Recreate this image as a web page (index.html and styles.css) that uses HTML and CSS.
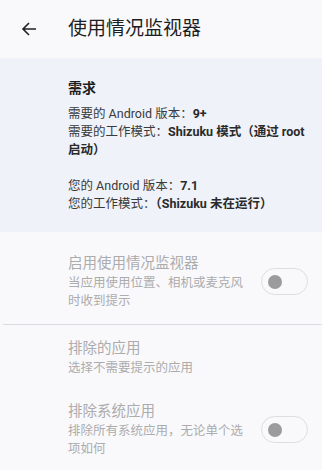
FILE: index.html
```html
<!DOCTYPE html>
<html lang="zh-CN">
<head>
<meta charset="utf-8">
<link rel="stylesheet" href="styles.css">
</head>
<body>
<div class="app">
  <header class="bar">
    <svg class="back" width="16" height="16" viewBox="0 0 16 16"><path d="M15 8H2M8 2L2 8l6 6" fill="none" stroke="#222" stroke-width="1.6"/></svg>
    <h1 class="title">使用情况监视器</h1>
  </header>
  <section class="card">
    <div class="card-head">需求</div>
    <p class="line">需要的 Android 版本：<b>9+</b></p>
    <p class="line">需要的工作模式：<b>Shizuku 模式（通过 root 启动）</b></p>
    <p class="line blank">&nbsp;</p>
    <p class="line">您的 Android 版本：<b>7.1</b></p>
    <p class="line">您的工作模式：<b>（Shizuku 未在运行）</b></p>
  </section>
  <div class="row first">
    <div class="text">
      <div class="r-title">启用使用情况监视器</div>
      <div class="r-sub">当应用使用位置、相机或麦克风时收到提示</div>
    </div>
    <div class="switch"><span class="thumb"></span></div>
  </div>
  <div class="divider"></div>
  <div class="row second">
    <div class="text">
      <div class="r-title">排除的应用</div>
      <div class="r-sub">选择不需要提示的应用</div>
    </div>
  </div>
  <div class="row third">
    <div class="text">
      <div class="r-title">排除系统应用</div>
      <div class="r-sub">排除所有系统应用，无论单个选项如何</div>
    </div>
    <div class="switch"><span class="thumb"></span></div>
  </div>
</div>
</body>
</html>
```
FILE: styles.css
```css
html, body {
  margin: 0;
  padding: 0;
  background: #ffffff;
}
body {
  font-family: Roboto, "Noto Sans CJK SC", sans-serif;
}
.app {
  width: 322px;
  height: 470px;
  background: #f9f9fc;
  overflow: hidden;
}
.bar {
  height: 58px;
  display: flex;
  align-items: center;
}
.back {
  margin-left: 21px;
  margin-right: 31px;
  flex: none;
}
.title {
  margin: 0;
  font-size: 19px;
  font-weight: 400;
  color: #1e1e1e;
  line-height: 24px;
  margin-top: -1px;
}
.card {
  background: #eff2f9;
  padding: 20px 6px 19px 68px;
}
.card-head {
  font-size: 14px;
  font-weight: 700;
  color: #1e1e1e;
  line-height: 20px;
  margin-bottom: 7px;
}
.line {
  margin: 0;
  font-size: 12.5px;
  line-height: 18px;
  color: #3a3a3a;
}
.line b {
  font-weight: 700;
  color: #2a2a2a;
}
.row {
  display: flex;
  align-items: center;
  padding-left: 68px;
  padding-right: 14px;
}
.row.first {
  padding-top: 21px;
  padding-bottom: 14px;
}
.row.second {
  padding-top: 13px;
  padding-bottom: 24px;
}
.text {
  width: 185px;
}
.r-title {
  font-size: 14.5px;
  line-height: 21px;
  color: #acacac;
}
.r-sub {
  font-size: 12.5px;
  line-height: 18px;
  color: #acacac;
}
.switch {
  margin-left: auto;
  height: 25px;
  border: 1.5px solid #dedede;
  border-radius: 15px;
  display: flex;
  align-items: center;
  padding-left: 6px;
  box-sizing: content-box;
  width: 39px;
}
.thumb {
  width: 14px;
  height: 14px;
  border-radius: 50%;
  background: #9b9b9b;
}
.divider {
  height: 1px;
  background: #dcdce0;
  margin-left: 3px;
}
```
